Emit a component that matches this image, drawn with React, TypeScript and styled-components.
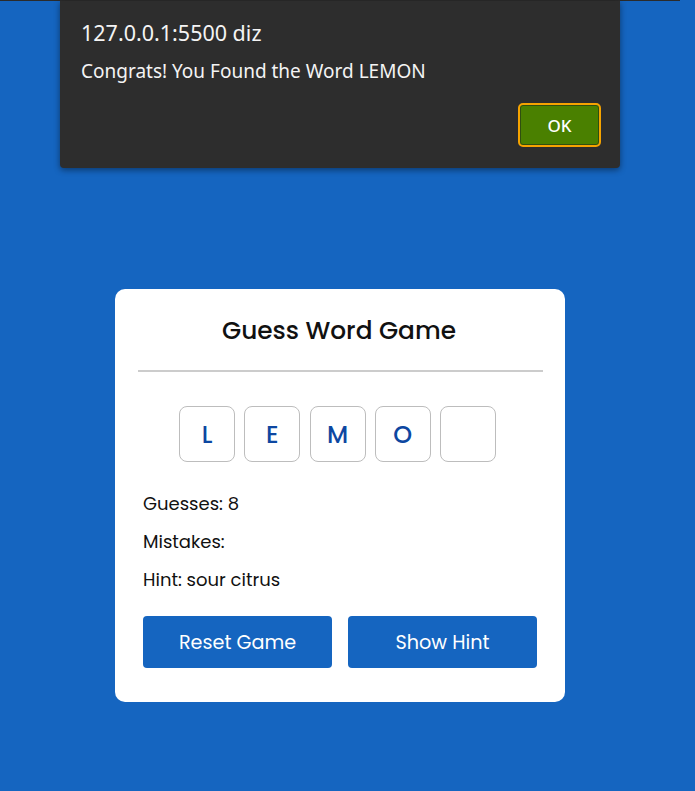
import React from "react";
import styled, { createGlobalStyle } from "styled-components";

const Global = createGlobalStyle`
  html, body { margin: 0; padding: 0; }
  body {
    background: #1565c0;
    font-family: "Poppins", "Inter", "Noto Sans", sans-serif;
    height: 791px;
    overflow: hidden;
  }
  * { box-sizing: border-box; }
`;

const Page = styled.div`
  position: relative;
  width: 680px;
  height: 791px;
  border-top: 1px solid #2b2b2b;
  display: flex;
  justify-content: center;
  padding-top: 288px;
`;

const Dialog = styled.div`
  position: absolute;
  top: 0;
  left: 60px;
  width: 560px;
  height: 167px;
  background: #2d2d2d;
  border-radius: 0 0 4px 4px;
  box-shadow: 0 2px 6px rgba(0, 0, 0, 0.45);
  padding: 16px 19px 0 21px;
  font-family: "Noto Sans", "Open Sans", sans-serif;
  color: #f4f4f4;
  display: flex;
  flex-direction: column;
`;

const DialogTitle = styled.div`
  font-size: 21.5px;
  line-height: 31px;
`;

const DialogMessage = styled.div`
  font-size: 19px;
  line-height: 27px;
  margin-top: 10px;
`;

const DialogActions = styled.div`
  display: flex;
  justify-content: flex-end;
  margin-top: 18px;
`;

const OkButton = styled.button`
  width: 83px;
  height: 44px;
  border: 2px solid #f5a300;
  border-radius: 5px;
  background: #4a8000;
  box-shadow: inset 0 0 0 1px #2f4f10;
  color: #fff;
  font-family: "Noto Sans", "Open Sans", sans-serif;
  font-size: 17px;
  font-weight: 500;
  padding: 0;
`;

const Card = styled.div`
  width: 450px;
  height: 413px;
  background: #fff;
  border-radius: 10px;
  padding: 23px 22px 0 23px;
  display: flex;
  flex-direction: column;
`;

const Title = styled.h1`
  margin: 0;
  font-size: 24.8px;
  font-weight: 500;
  color: #111;
  text-align: center;
  line-height: 38px;
  padding-right: 3px;
`;

const Divider = styled.hr`
  margin: 20px 0 0;
  border: none;
  height: 2px;
  background: #cccccc;
`;

const Letters = styled.div`
  display: flex;
  justify-content: center;
  gap: 9.25px;
  margin-top: 34px;
  padding-right: 6px;
`;

const LetterBox = styled.div`
  width: 56px;
  height: 56px;
  border: 1px solid #bdbdbd;
  border-radius: 8px;
  display: flex;
  align-items: center;
  justify-content: center;
  color: #0d47a1;
  font-size: 24px;
  font-weight: 500;
`;

const Info = styled.div`
  padding: 0 5px;
  margin-top: 28px;
  display: flex;
  flex-direction: column;
  gap: 11px;
`;

const InfoLine = styled.p`
  margin: 0;
  font-size: 18px;
  line-height: 27px;
  color: #111;
`;

const Buttons = styled.div`
  display: flex;
  gap: 16px;
  padding: 0 6px 0 5px;
  margin-top: 23px;
`;

const ActionButton = styled.button`
  flex: 1;
  height: 52px;
  border: none;
  border-radius: 4px;
  background: #1565c0;
  color: #fff;
  font-family: "Poppins", "Inter", "Noto Sans", sans-serif;
  font-size: 19.2px;
  font-weight: 400;
`;

export default function App() {
  const letters = ["L", "E", "M", "O", ""];
  return (
    <>
      <Global />
      <Page>
        <Card>
          <Title>Guess Word Game</Title>
          <Divider />
          <Letters>
            {letters.map((l, i) => (
              <LetterBox key={i}>{l}</LetterBox>
            ))}
          </Letters>
          <Info>
            <InfoLine>Guesses: 8</InfoLine>
            <InfoLine>Mistakes:</InfoLine>
            <InfoLine>Hint: sour citrus</InfoLine>
          </Info>
          <Buttons>
            <ActionButton>Reset Game</ActionButton>
            <ActionButton>Show Hint</ActionButton>
          </Buttons>
        </Card>
        <Dialog>
          <DialogTitle>127.0.0.1:5500 diz</DialogTitle>
          <DialogMessage>Congrats! You Found the Word LEMON</DialogMessage>
          <DialogActions>
            <OkButton>OK</OkButton>
          </DialogActions>
        </Dialog>
      </Page>
    </>
  );
}
